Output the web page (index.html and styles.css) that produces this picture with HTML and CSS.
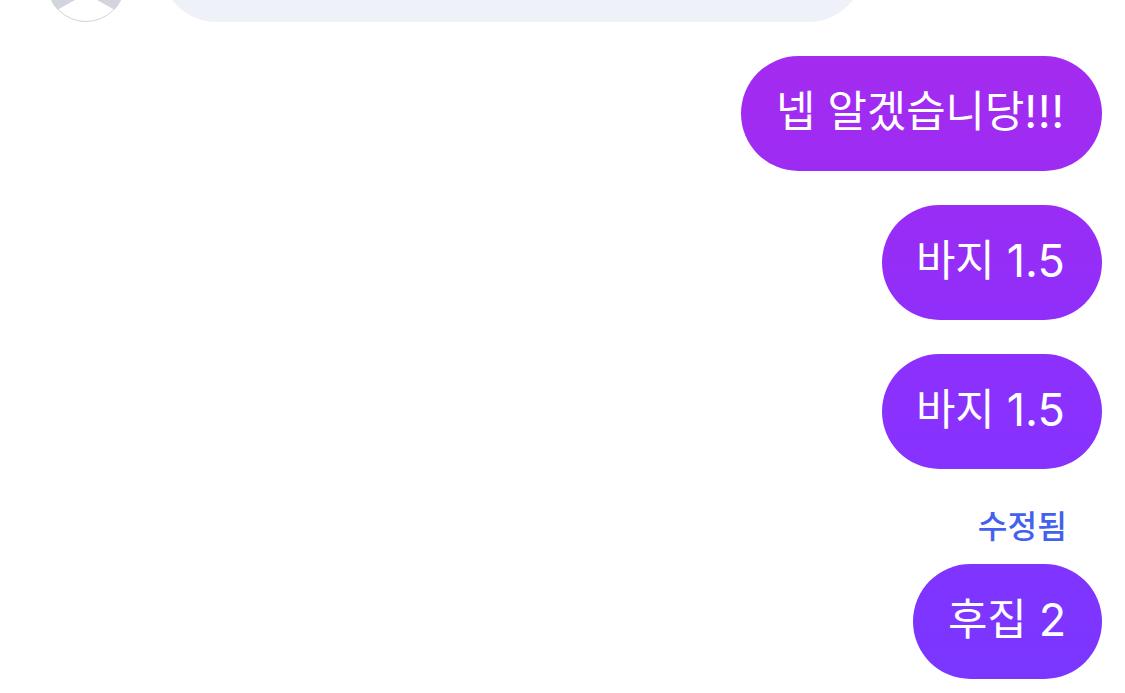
FILE: index.html
```
<!DOCTYPE html>
<html lang="ko">
  <head>
    <meta charset="UTF-8" />
    <meta name="viewport" content="width=device-width, initial-scale=1.0" />
    <title>Chat</title>
    <link rel="stylesheet" href="styles.css">
  </head>
  <body>
    <main class="chat">
      <div class="received">
        <div class="avatar">
          <svg viewBox="0 0 78 78" width="78" height="78">
            <circle cx="39" cy="39" r="39" fill="#d3d5de" />
            <circle cx="39" cy="30" r="16" fill="#fff" />
            <path d="M10 66 L28 56 H50 L68 66 L59 78 H19 Z" fill="#fff" />
            <circle cx="39" cy="39" r="38.5" fill="none" stroke="#d3d3d8" />
          </svg>
        </div>
        <div class="bubble-received"></div>
      </div>
      <div class="sent">
        <div class="bubble first"><span>넵 알겠습니당<b>!!!</b></span></div>
        <div class="bubble second"><span>바지 <b>1.5</b></span></div>
        <div class="bubble third"><span>바지 <b>1.5</b></span></div>
        <p class="edited">수정됨</p>
        <div class="bubble fourth"><span>후집 <b>2</b></span></div>
      </div>
    </main>
  </body>
</html>
```
FILE: styles.css
```
* {
  box-sizing: border-box;
  margin: 0;
  padding: 0;
}

body {
  font-family: Inter, "Noto Sans CJK KR", sans-serif;
  background-color: #fff;
  overflow: hidden;
}

.chat {
  height: 693px;
  overflow: hidden;
}

.received {
  display: flex;
  align-items: flex-end;
  height: 22px;
  padding-left: 47px;
}

.avatar {
  width: 78px;
  height: 78px;
}

.avatar svg {
  display: block;
}

.bubble-received {
  width: 705px;
  height: 114px;
  margin-left: 35px;
  border-radius: 57px;
  background-color: #eef1f7;
}

.sent {
  display: flex;
  flex-direction: column;
  align-items: flex-end;
  padding: 34px 23px 0 0;
}

.bubble {
  display: flex;
  align-items: center;
  height: 115px;
  margin-bottom: 34px;
  padding: 0 35px 4px;
  border-radius: 58px;
  color: #fff;
  font-size: 42.8px;
  line-height: 60px;
  white-space: nowrap;
}

.bubble b {
  font-size: 45px;
  font-weight: 400;
  line-height: 1;
  vertical-align: -1px;
}

.first {
  width: 361px;
  background: linear-gradient(#a42bef, #9d2cf3);
}

.first b {
  letter-spacing: 0.5px;
}

.second {
  width: 220px;
  padding-left: 34px;
  background: linear-gradient(#992df5, #902efa);
}

.third {
  width: 220px;
  padding-left: 34px;
  background: linear-gradient(#8d30fd, #8632ff);
}

.fourth {
  width: 189px;
  background: linear-gradient(#8034ff, #7a36ff);
}

.edited {
  height: 61px;
  padding-right: 35px;
  color: #4361ee;
  font-size: 32.3px;
  font-weight: 500;
  line-height: 47px;
}
```
